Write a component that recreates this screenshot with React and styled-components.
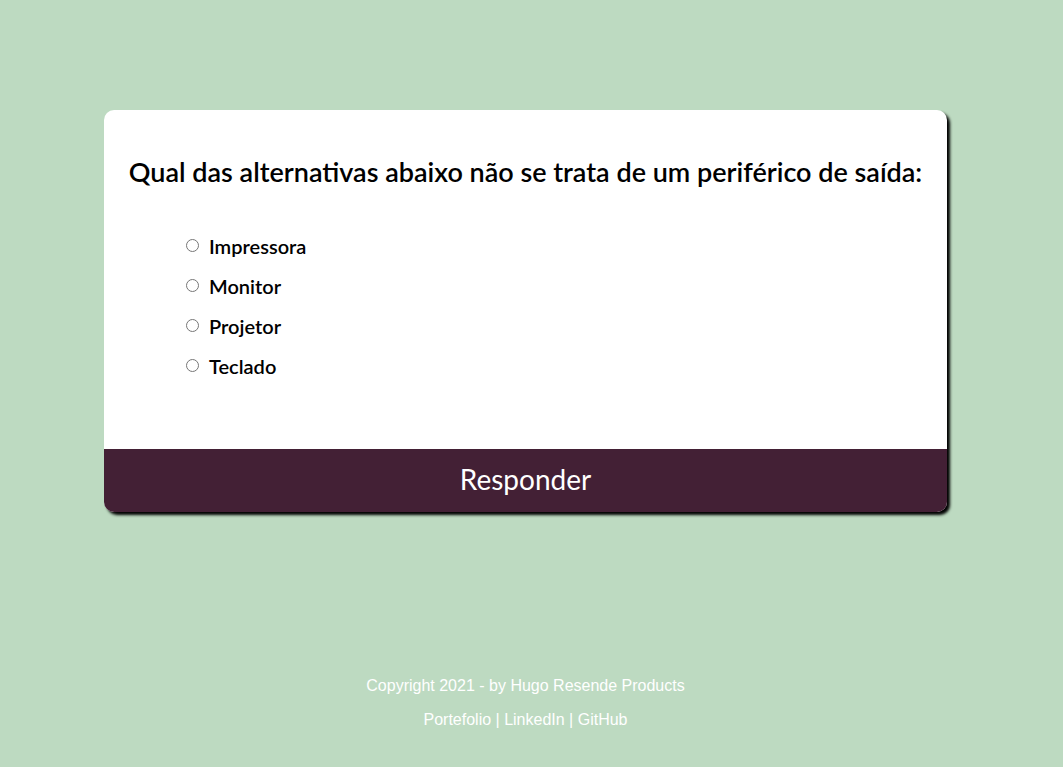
import styled, { createGlobalStyle } from "styled-components";

const GlobalStyle = createGlobalStyle`
  html, body {
    margin: 0;
    padding: 0;
    background: #bddac1;
  }
  body {
    font-family: "Lato", "Liberation Sans", sans-serif;
  }
`;

const Page = styled.div`
  min-height: 767px;
  padding: 110px 12px 0 0;
  box-sizing: border-box;
  display: flex;
  flex-direction: column;
  align-items: center;
`;

const Card = styled.form`
  width: 843px;
  background: #fff;
  border-radius: 10px;
  box-shadow: 3px 3px 3px #000;
  overflow: hidden;
  display: flex;
  flex-direction: column;
`;

const Question = styled.h2`
  margin: 0;
  padding: 46px 0 0;
  font-size: 27px;
  font-weight: 600;
  line-height: 32px;
  color: #000;
  text-align: center;
`;

const Options = styled.ul`
  list-style: none;
  margin: 0;
  padding: 38px 0 63px 82px;
  display: flex;
  flex-direction: column;
`;

const Option = styled.li`
  height: 40px;
  display: flex;
  align-items: center;
  gap: 10px;
  font-size: 20px;
  font-weight: 600;
  color: #000;

  input {
    margin: 0;
    width: 13px;
    height: 13px;
    position: relative;
    top: -1px;
  }
`;

const Submit = styled.button`
  height: 63px;
  padding: 0 0 4px;
  border: none;
  background: #432035;
  color: #fff;
  font-family: "Lato", sans-serif;
  font-size: 28px;
  font-weight: 400;
  cursor: pointer;
`;

const Footer = styled.footer`
  margin-top: 165px;
  font-family: "Liberation Sans", Arial, sans-serif;
  font-size: 16px;
  color: #fff;
  text-align: center;

  p {
    margin: 0 0 16px;
    line-height: 18px;
  }

  a {
    color: #fff;
    text-decoration: none;
  }
`;

const options = ["Impressora", "Monitor", "Projetor", "Teclado"];

export default function App() {
  return (
    <>
      <GlobalStyle />
      <Page>
        <Card onSubmit={(e) => e.preventDefault()}>
          <Question>
            Qual das alternativas abaixo não se trata de um periférico de saída:
          </Question>
          <Options>
            {options.map((o) => (
              <Option key={o}>
                <input type="radio" name="resposta" id={o} />
                <label htmlFor={o}>{o}</label>
              </Option>
            ))}
          </Options>
          <Submit type="submit">Responder</Submit>
        </Card>
        <Footer>
          <p>Copyright 2021 - by Hugo Resende Products</p>
          <p>
            <a href="#">Portefolio</a> | <a href="#">LinkedIn</a> |{" "}
            <a href="#">GitHub</a>
          </p>
        </Footer>
      </Page>
    </>
  );
}
